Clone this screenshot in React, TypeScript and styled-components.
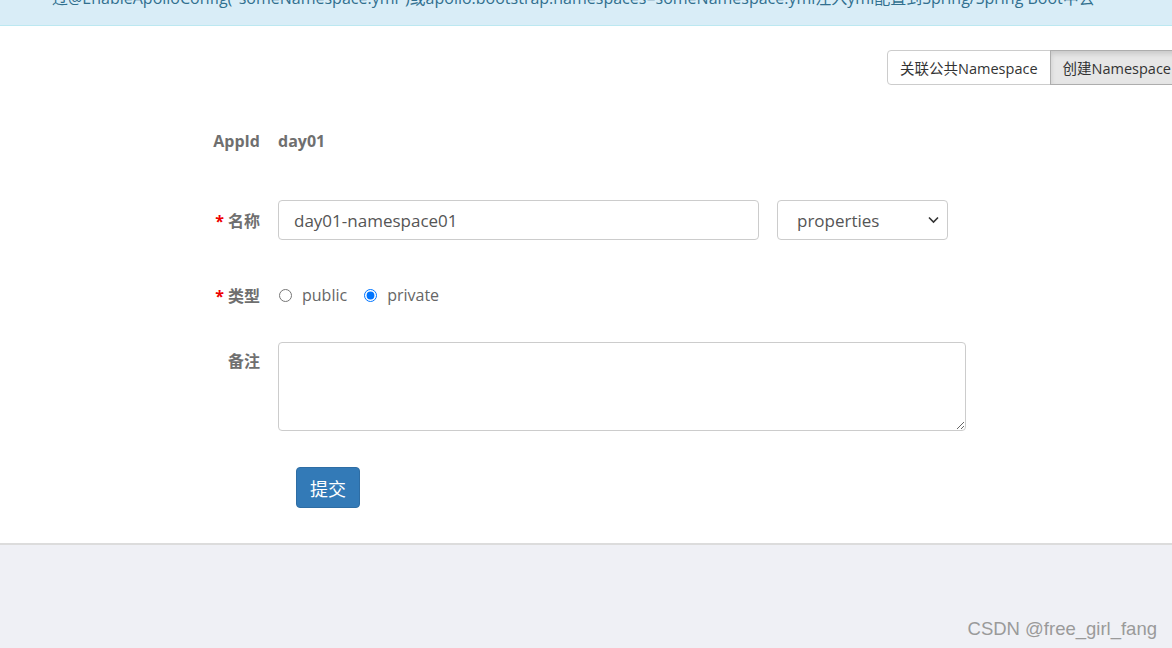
import React from "react";
import styled, { createGlobalStyle } from "styled-components";

const Global = createGlobalStyle`
  html, body { margin: 0; padding: 0; }
  body {
    width: 1172px;
    height: 648px;
    overflow: hidden;
    font-family: "Open Sans", "Noto Sans CJK SC", sans-serif;
    background: #eff0f5;
  }
  * { box-sizing: border-box; }
`;

const Page = styled.div`
  display: flex;
  flex-direction: column;
  width: 1172px;
  height: 648px;
  overflow: hidden;
`;

const Banner = styled.div`
  margin-top: -12px;
  padding: 0 0 17px 52px;
  line-height: 20px;
  font-size: 16px;
  color: #31708f;
  background: #d9edf7;
  border-bottom: 1px solid #bce8f1;
  white-space: nowrap;
  overflow: hidden;
`;

const Panel = styled.div`
  background: #fff;
  padding: 24px 0 35px;
  border-bottom: 2px solid #dcdcdc;
`;

const Toolbar = styled.div`
  display: flex;
  justify-content: flex-end;
  margin-right: -12px;
`;

const GroupButton = styled.button<{ $active?: boolean }>`
  height: 35px;
  padding: 0 12px;
  font-family: "Open Sans", "Noto Sans CJK SC", sans-serif;
  font-size: 14.5px;
  color: #333;
  background: ${(p) => (p.$active ? "#e6e6e6" : "#fff")};
  border: 1px solid ${(p) => (p.$active ? "#adadad" : "#ccc")};
  box-shadow: ${(p) => (p.$active ? "inset 0 3px 5px rgba(0,0,0,.125)" : "none")};
  border-radius: 0;
  & + & { margin-left: -1px; }
  &:first-child { border-radius: 4px 0 0 4px; }
`;

const Form = styled.div`
  display: flex;
  flex-direction: column;
`;

const Row = styled.div<{ $mt: number; $h: number }>`
  display: grid;
  grid-template-columns: 260px 1fr;
  column-gap: 18px;
  margin-top: ${(p) => p.$mt}px;
  min-height: ${(p) => p.$h}px;
  align-items: center;
`;

const Label = styled.div<{ $top?: boolean }>`
  text-align: right;
  font-size: 16px;
  font-weight: 700;
  color: #6f6f6f;
  align-self: ${(p) => (p.$top ? "start" : "center")};
  padding-top: ${(p) => (p.$top ? "6px" : "0")};
`;

const Star = styled.span`
  color: #e00;
  margin-right: 4px;
`;

const Value = styled.div`
  font-size: 16px;
  font-weight: 700;
  color: #6f6f6f;
`;

const Fields = styled.div`
  display: flex;
  align-items: center;
  gap: 18px;
`;

const TextInput = styled.input`
  width: 481px;
  height: 40px;
  padding: 0 15px;
  font-family: "Open Sans", "Noto Sans CJK SC", sans-serif;
  font-size: 17px;
  color: #555;
  border: 1px solid #ccc;
  border-radius: 4px;
  outline: none;
`;

const SelectWrap = styled.div`
  position: relative;
  width: 171px;
  height: 40px;
`;

const Select = styled.select`
  appearance: none;
  width: 100%;
  height: 100%;
  padding: 0 30px 0 19px;
  font-family: "Open Sans", "Noto Sans CJK SC", sans-serif;
  font-size: 17px;
  color: #555;
  background: #fff;
  border: 1px solid #ccc;
  border-radius: 4px;
  outline: none;
`;

const Chevron = styled.svg`
  position: absolute;
  right: 9px;
  top: 16px;
  pointer-events: none;
`;

const Radios = styled.div`
  display: flex;
  align-items: center;
  font-size: 16px;
  color: #666;
`;

const RadioLabel = styled.label`
  display: flex;
  align-items: center;
  margin-right: 16px;
  input { margin: 0 10px 0 1px; width: 13px; height: 13px; }
`;

const TextArea = styled.textarea`
  width: 688px;
  height: 89px;
  border: 1px solid #ccc;
  border-radius: 4px;
  font-size: 16px;
  outline: none;
`;

const Submit = styled.button`
  margin-left: 18px;
  width: 64px;
  height: 41px;
  font-family: "Open Sans", "Noto Sans CJK SC", sans-serif;
  font-size: 18px;
  color: #fff;
  background: #337ab7;
  border: 1px solid #2e6da4;
  border-radius: 4px;
`;

const Footer = styled.div`
  flex: 1;
  display: flex;
  align-items: flex-end;
  justify-content: flex-end;
  padding: 0 15px 8px 0;
`;

const Watermark = styled.div`
  font-family: "Liberation Sans", Arial, sans-serif;
  font-size: 18.5px;
  color: #9a9a9a;
`;

export default function App() {
  return (
    <Page>
      <Global />
      <Banner>
        过@EnableApolloConfig("someNamespace.yml")或apollo.bootstrap.namespaces=someNamespace.yml注入yml配置到Spring/Spring Boot中去
      </Banner>
      <Panel>
        <Toolbar>
          <GroupButton>关联公共Namespace</GroupButton>
          <GroupButton $active>创建Namespace</GroupButton>
        </Toolbar>
        <Form>
          <Row $mt={41} $h={30}>
            <Label>AppId</Label>
            <Value>day01</Value>
          </Row>
          <Row $mt={44} $h={40}>
            <Label>
              <Star>*</Star>名称
            </Label>
            <Fields>
              <TextInput defaultValue="day01-namespace01" />
              <SelectWrap>
                <Select defaultValue="properties">
                  <option value="properties">properties</option>
                  <option value="xml">xml</option>
                  <option value="json">json</option>
                  <option value="yml">yml</option>
                  <option value="yaml">yaml</option>
                </Select>
                <Chevron width="11" height="8" viewBox="0 0 11 8">
                  <path d="M1 1.5 L5.5 6 L10 1.5" fill="none" stroke="#333" strokeWidth="1.6" />
                </Chevron>
              </SelectWrap>
            </Fields>
          </Row>
          <Row $mt={40} $h={30}>
            <Label>
              <Star>*</Star>类型
            </Label>
            <Radios>
              <RadioLabel>
                <input type="radio" name="type" />
                public
              </RadioLabel>
              <RadioLabel>
                <input type="radio" name="type" defaultChecked />
                private
              </RadioLabel>
            </Radios>
          </Row>
          <Row $mt={32} $h={89}>
            <Label $top>备注</Label>
            <TextArea />
          </Row>
          <Row $mt={36} $h={41}>
            <div />
            <div>
              <Submit>提交</Submit>
            </div>
          </Row>
        </Form>
      </Panel>
      <Footer>
        <Watermark>CSDN @free_girl_fang</Watermark>
      </Footer>
    </Page>
  );
}
